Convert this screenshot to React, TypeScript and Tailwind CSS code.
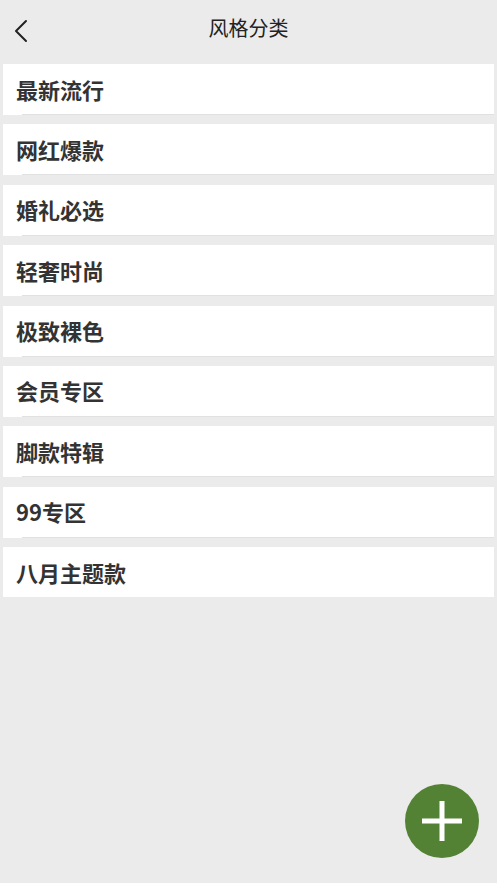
const categories = ['最新流行', '网红爆款', '婚礼必选', '轻奢时尚', '极致裸色', '会员专区', '脚款特辑', '99专区', '八月主题款']

export default function App() {
  return (
    <div
      className="relative min-h-[883px] w-full bg-[#ebebeb]"
      style={{fontFamily: '"Noto Sans CJK SC", "Noto Sans", sans-serif'}}
    >
      <header className="relative flex h-[55px] items-center justify-center">
        <button className="absolute left-[10px] top-[15px] p-1">
          <svg width="14" height="24" viewBox="0 0 14 24" fill="none">
            <path d="M12 2 L2 12 L12 22" stroke="#222" strokeWidth="2" strokeLinecap="round" strokeLinejoin="round" />
          </svg>
        </button>
        <h1 className="text-[20px] font-normal text-[#222]">风格分类</h1>
      </header>

      <ul className="mt-[9px] px-[3px]">
        {categories.map((name, i) => (
          <li key={name} className={i < categories.length - 1 ? 'mb-[9.4px]' : ''}>
            <div className="flex h-[50px] items-center bg-white pl-[13px] text-[22px] font-bold text-[#333]">
              {name}
            </div>
            {i < categories.length - 1 && (
              <div className="flex h-px bg-white">
                <div className="ml-[19px] flex-1 bg-[#e1e1e1]" />
              </div>
            )}
          </li>
        ))}
      </ul>

      <button className="absolute left-[405px] top-[784px] flex h-[74px] w-[74px] items-center justify-center rounded-full bg-[#548235]">
        <svg width="40" height="40" viewBox="0 0 40 40">
          <rect x="0" y="17.5" width="40" height="5" fill="#fff" />
          <rect x="17.5" y="0" width="5" height="40" fill="#fff" />
        </svg>
      </button>
    </div>
  )
}
